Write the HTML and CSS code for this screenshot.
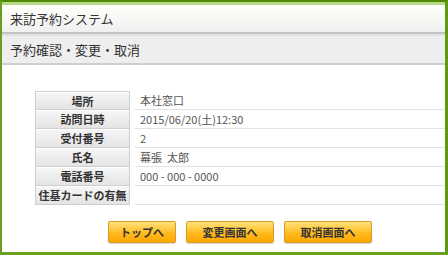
FILE: index.html
```html
<!DOCTYPE html>
<html lang="ja">
<head>
    <meta charset="UTF-8">
    <title>来訪予約システム</title>
    <link rel="stylesheet" href="styles.css">
</head>
<body>
    <div class="frame">
        <div class="site-title">来訪予約システム</div>
        <div class="page-title">予約確認・変更・取消</div>
        <div class="main">
            <div class="detail">
                <div class="label">場所</div>
                <div class="value">本社窓口</div>
                <div class="label">訪問日時</div>
                <div class="value">2015/06/20(土)12:30</div>
                <div class="label">受付番号</div>
                <div class="value">2</div>
                <div class="label">氏名</div>
                <div class="value">幕張&nbsp;&nbsp;太郎</div>
                <div class="label">電話番号</div>
                <div class="value">000 - 000 - 0000</div>
                <div class="label">住基カードの有無</div>
                <div class="value"></div>
            </div>
            <div class="actions">
                <button type="button" class="btn btn-top">トップへ</button>
                <button type="button" class="btn">変更画面へ</button>
                <button type="button" class="btn">取消画面へ</button>
            </div>
        </div>
    </div>
</body>
</html>
```

FILE: styles.css
```css
body {
    margin: 0;
    font-family: "Noto Sans CJK JP", "Noto Sans", sans-serif;
    color: #333;
    background-color: #fff;
}

.frame {
    width: 448px;
    height: 255px;
    box-sizing: border-box;
    border-top: 2px solid #4f8a00;
    border-left: 2px solid #6a9e1f;
    border-right: 3px solid #5f9a10;
    border-bottom: 3px solid #6aa120;
    overflow: hidden;
}

.site-title {
    height: 27px;
    line-height: 27px;
    padding-left: 8px;
    font-size: 13px;
    border-top: 3px solid #b8d98c;
    border-bottom: 2px solid #c2c2c2;
    background: linear-gradient(#fffffa, #f0f0f0);
}

.page-title {
    height: 27px;
    line-height: 27px;
    padding-left: 8px;
    font-size: 13px;
    border-top: 2px solid #e2e2e2;
    border-bottom: 2px solid #cfcfcf;
    background-color: #eeeeee;
}

.main {
    padding: 26px 0 0 33px;
}

.detail {
    display: grid;
    grid-template-columns: 95px 1fr;
    column-gap: 5px;
    grid-auto-rows: 19px;
}

.label {
    box-sizing: border-box;
    border: 1px solid #cfcfcf;
    border-top: none;
    box-shadow: inset 0 1px #fff;
    background: linear-gradient(#f7f7f7, #e4e4e4);
    font-size: 11px;
    font-weight: bold;
    line-height: 18px;
    text-align: center;
    color: #333;
}

.label:first-child {
    border-top: 1px solid #cfcfcf;
}

.value {
    box-sizing: border-box;
    border-bottom: 1px solid #e2e2e2;
    padding-left: 5px;
    font-size: 11px;
    line-height: 18px;
    color: #555;
}

.actions {
    display: flex;
    justify-content: center;
    gap: 10px;
    margin-top: 16px;
}

.btn {
    width: 88px;
    height: 22px;
    padding: 0;
    border: 1px solid #d89a2a;
    border-radius: 2px;
    background: linear-gradient(#ffe27a, #ffb81c 60%, #ffa800);
    box-shadow: 0 1px 1px rgba(0, 0, 0, 0.15);
    font-family: "Noto Sans CJK JP", "Noto Sans", sans-serif;
    font-size: 11px;
    font-weight: bold;
    color: #333;
    cursor: pointer;
}

.btn-top {
    width: 68px;
}
```
